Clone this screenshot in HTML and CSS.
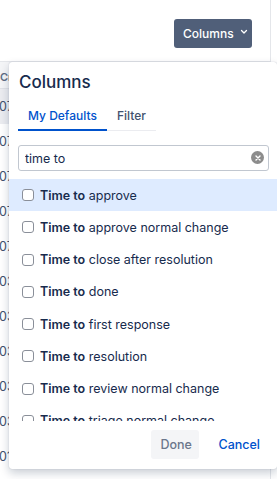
FILE: index.html
```html
<!DOCTYPE html>
<html>
<head>
  <title>Columns</title>
  <link rel="stylesheet" href="styles.css">
</head>
<body>
  <div class="page">
    <div class="toolbar">
      <button class="columns-btn">Columns
        <svg width="8" height="6" viewBox="0 0 8 6"><path d="M1.5 1.5 L4 4 L6.5 1.5" fill="none" stroke="#fff" stroke-width="1.3" stroke-linecap="round" stroke-linejoin="round"/></svg>
      </button>
    </div>

    <div class="table">
      <div class="table-head">Cre</div>
      <div class="table-row hover">07</div>
      <div class="table-row">07</div>
      <div class="table-row">07</div>
      <div class="table-row">07</div>
      <div class="table-row">07</div>
      <div class="table-row">03</div>
      <div class="table-row">03</div>
      <div class="table-row">03</div>
      <div class="table-row">03</div>
      <div class="table-row">03</div>
      <div class="table-row">01,</div>
    </div>
  </div>

  <div class="popup">
    <h2>Columns</h2>

    <div class="tabs">
      <div class="tab active">My Defaults</div>
      <div class="tab">Filter</div>
    </div>

    <div class="search">
      <input type="text" value="time to">
      <span class="clear">
        <svg width="6" height="6" viewBox="0 0 6 6"><path d="M1 1 L5 5 M5 1 L1 5" stroke="#fff" stroke-width="1.4" stroke-linecap="round"/></svg>
      </span>
    </div>

    <div class="list">
      <label class="item selected"><input type="checkbox"><span><b>Time to</b> approve</span></label>
      <label class="item"><input type="checkbox"><span><b>Time to</b> approve normal change</span></label>
      <label class="item"><input type="checkbox"><span><b>Time to</b> close after resolution</span></label>
      <label class="item"><input type="checkbox"><span><b>Time to</b> done</span></label>
      <label class="item"><input type="checkbox"><span><b>Time to</b> first response</span></label>
      <label class="item"><input type="checkbox"><span><b>Time to</b> resolution</span></label>
      <label class="item"><input type="checkbox"><span><b>Time to</b> review normal change</span></label>
      <label class="item"><input type="checkbox"><span><b>Time to</b> triage normal change</span></label>
    </div>

    <div class="footer">
      <button class="btn done">Done</button>
      <button class="btn cancel">Cancel</button>
    </div>
  </div>
</body>
</html>
```

FILE: styles.css
```css
body {
  margin: 0;
  font-family: Inter, "Noto Sans", sans-serif;
  color: #172b4d;
  background: #fff;
  overflow: hidden;
  width: 277px;
  height: 479px;
}

.page {
  width: 271px;
  height: 479px;
  border-right: 1px solid #e4e6ea;
  box-sizing: border-box;
}

.toolbar {
  height: 62px;
  display: flex;
  justify-content: flex-end;
  align-items: flex-start;
  padding: 19px 18px 0 0;
  box-sizing: border-box;
  border-bottom: 1px solid #e4e6ea;
}

.columns-btn {
  height: 29px;
  width: 78px;
  padding: 0 0 0 9px;
  display: flex;
  align-items: center;
  gap: 6px;
  background-color: #505f79;
  color: #fff;
  border: none;
  border-radius: 3px;
  font-family: inherit;
  font-size: 12px;
  font-weight: 500;
}

.columns-btn svg {
  margin-top: -3px;
}

.table {
  font-size: 12.5px;
  color: #42526e;
}

.table-head {
  height: 26px;
  line-height: 30px;
  background-color: #f4f5f7;
  border-bottom: 1px solid #dfe1e6;
  font-size: 11px;
  font-weight: 600;
  color: #5e6c84;
  padding-left: 0;
}

.table-row {
  height: 35px;
  line-height: 36px;
  margin-left: -1px;
}

.table-row.hover {
  background-color: #ebecf0;
}

.popup {
  position: absolute;
  left: 9px;
  top: 62px;
  width: 268px;
  height: 407px;
  background: #fff;
  border-radius: 3px;
  box-shadow: 0 4px 10px rgba(9, 30, 66, 0.22), 0 0 1px rgba(9, 30, 66, 0.3);
  display: flex;
  flex-direction: column;
}

h2 {
  margin: 0;
  padding: 9px 0 0 10px;
  font-size: 17px;
  font-weight: 500;
  line-height: 22px;
  color: #172b4d;
}

.tabs {
  display: flex;
  align-self: flex-start;
  margin: 12px 0 0 9px;
  border-bottom: 1px solid #ebecf0;
}

.tab {
  padding: 0 10px;
  height: 24px;
  line-height: 22px;
  font-size: 12px;
  font-weight: 500;
  color: #42526e;
  white-space: nowrap;
}

.tab.active {
  color: #0052cc;
  border-bottom: 2px solid #0052cc;
  margin-bottom: -1px;
}

.search {
  position: relative;
  margin: 14px 8px 0 9px;
}

.search input {
  display: block;
  width: 100%;
  height: 26px;
  box-sizing: border-box;
  border: 1px solid #c1c7d0;
  border-radius: 3px;
  padding: 0 6px;
  font-family: inherit;
  font-size: 12.5px;
  color: #172b4d;
}

.clear {
  position: absolute;
  right: 5px;
  top: 6px;
  width: 13px;
  height: 13px;
  border-radius: 50%;
  background-color: #8c8c8c;
  display: flex;
  align-items: center;
  justify-content: center;
}

.list {
  margin-top: 8px;
  height: 242px;
  overflow-y: scroll;
}

.list::-webkit-scrollbar {
  width: 14px;
}

.list::-webkit-scrollbar-track {
  background-color: #fafafa;
  border-left: 1px solid #ececec;
}

.list::-webkit-scrollbar-thumb {
  background-color: #c1c1c1;
  border-radius: 7px;
  border: 3px solid transparent;
  background-clip: padding-box;
}

.item {
  display: flex;
  align-items: center;
  height: 32.25px;
  padding-left: 13px;
  font-size: 12.5px;
  color: #172b4d;
  white-space: nowrap;
}

.item.selected {
  background-color: #deebff;
}

.item input {
  appearance: none;
  flex: none;
  width: 12px;
  height: 12px;
  margin: 0 6px 0 0;
  border: 1px solid #8a8f99;
  border-radius: 3px;
  background: #fff;
}

.item b {
  font-weight: 600;
}

.footer {
  display: flex;
  justify-content: flex-end;
  align-items: center;
  gap: 10px;
  padding: 9px 7px 0 0;
}

.btn {
  height: 29px;
  padding: 0 10px;
  border: none;
  border-radius: 3px;
  font-family: inherit;
  font-size: 12.5px;
  font-weight: 500;
  background: none;
}

.btn.done {
  width: 48px;
  background-color: #f4f5f7;
  color: #6b778c;
}

.btn.cancel {
  color: #0052cc;
}
```
